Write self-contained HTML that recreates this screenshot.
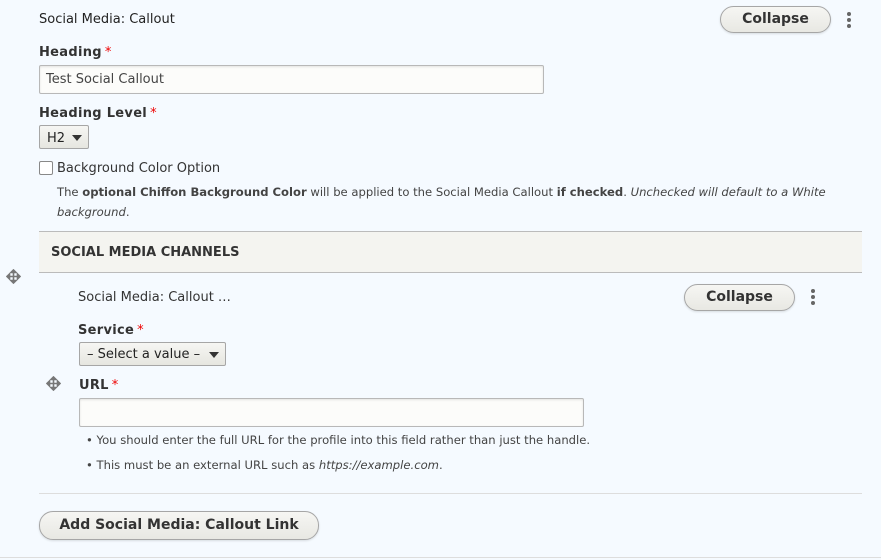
<!DOCTYPE html>
<html><head><meta charset="utf-8"><style>
*{box-sizing:border-box;margin:0;padding:0}
body{width:881px;height:560px;background:#f5faff;font-family:"DejaVu Sans","Liberation Sans",sans-serif;color:#222;font-size:13px;position:relative;overflow:hidden}
.a{position:absolute;white-space:nowrap}
.lbl{font-weight:bold;font-size:13px;color:#333;letter-spacing:0.3px}
.req{color:#e00;font-weight:normal;margin-left:3px}
.btn{position:absolute;border:1px solid #a6a6a6;border-radius:14px;background:linear-gradient(#f6f6f3,#e8e8e3);font-weight:bold;font-size:14px;color:#333;text-align:center;box-shadow:0 1px 2px rgba(0,0,0,.12)}
.dots{position:absolute;width:4px}
.dots i{display:block;width:4px;height:4px;border-radius:2px;background:#666;margin-bottom:2px}
.inp{position:absolute;border:1px solid #b8b8b8;border-radius:2px;background:#fcfcfa;box-shadow:inset 0 1px 2px rgba(0,0,0,.1)}
.sel{position:absolute;border:1px solid #a6a6a6;border-radius:2px;background:linear-gradient(#f6f6f3,#e6e6e0);font-size:13px;color:#222}
.sel:after{content:"";position:absolute;right:6px;top:9px;border-left:5px solid transparent;border-right:5px solid transparent;border-top:6px solid #333}
.desc{font-family:"DejaVu Sans",sans-serif;font-size:11.6px;color:#444}
</style></head><body>
<div class="a" style="left:39px;top:12px">Social Media: Callout</div>
<div class="btn" style="left:720px;top:6px;width:111px;height:27px;line-height:25px">Collapse</div>
<div class="dots" style="left:847px;top:12px"><i></i><i></i><i></i></div>

<div class="a lbl" style="left:39px;top:45px">Heading<span class="req">*</span></div>
<div class="inp" style="left:39px;top:65px;width:505px;height:29px"></div>
<div class="a" style="left:46px;top:72px;color:#444">Test Social Callout</div>

<div class="a lbl" style="left:39px;top:106px">Heading Level<span class="req">*</span></div>
<div class="sel" style="left:39px;top:125px;width:50px;height:24px;padding:5px 0 0 7px">H2</div>

<div class="a" style="left:39px;top:161px;width:14px;height:14px;border:1px solid #888;border-radius:2px;background:#fff"></div>
<div class="a" style="left:57px;top:161px;color:#333">Background Color Option</div>
<div class="a desc" style="left:57px;top:185px">The <b>optional Chiffon Background Color</b> will be applied to the Social Media Callout <b>if checked</b>. <i>Unchecked will default to a White</i></div>
<div class="a desc" style="left:57px;top:205px"><i>background</i>.</div>

<div class="a" style="left:39px;top:231px;width:823px;height:42px;background:#f4f4f0;border-top:1px solid #bbb;border-bottom:1px solid #bbb"></div>
<div class="a" style="left:51px;top:245px;font-weight:bold;font-size:13px;color:#333">SOCIAL MEDIA CHANNELS</div>

<svg class="a" style="left:6px;top:269px" width="15" height="15" viewBox="0 0 15 15"><path d="M7.5 1v13M1 7.5h13M7.5 1l-2.5 2.5h5zM7.5 14l-2.5-2.5h5zM1 7.5l2.5-2.5v5zM14 7.5l-2.5-2.5v5z" stroke="#777" stroke-width="1.6" fill="#777"/></svg>
<div class="a" style="left:78px;top:290px;color:#333">Social Media: Callout …</div>
<div class="btn" style="left:684px;top:284px;width:111px;height:27px;line-height:25px">Collapse</div>
<div class="dots" style="left:811px;top:289px"><i></i><i></i><i></i></div>

<div class="a lbl" style="left:78px;top:323px">Service<span class="req">*</span></div>
<div class="sel" style="left:79px;top:342px;width:147px;height:24px;padding:4px 0 0 7px">– Select a value –</div>

<svg class="a" style="left:46px;top:376px" width="15" height="15" viewBox="0 0 15 15"><path d="M7.5 1v13M1 7.5h13M7.5 1l-2.5 2.5h5zM7.5 14l-2.5-2.5h5zM1 7.5l2.5-2.5v5zM14 7.5l-2.5-2.5v5z" stroke="#777" stroke-width="1.6" fill="#777"/></svg>
<div class="a lbl" style="left:79px;top:378px">URL<span class="req">*</span></div>
<div class="inp" style="left:79px;top:398px;width:505px;height:29px"></div>
<div class="a desc" style="left:86px;top:433px">• You should enter the full URL for the profile into this field rather than just the handle.</div>
<div class="a desc" style="left:86px;top:458px">• This must be an external URL such as <i>https://example.com</i>.</div>

<div class="a" style="left:39px;top:493px;width:823px;height:1px;background:#ddd"></div>
<div class="btn" style="left:39px;top:511px;width:280px;height:29px;line-height:27px">Add Social Media: Callout Link</div>
<div class="a" style="left:0;top:557px;width:881px;height:1px;background:#ddd"></div>
</body></html>
